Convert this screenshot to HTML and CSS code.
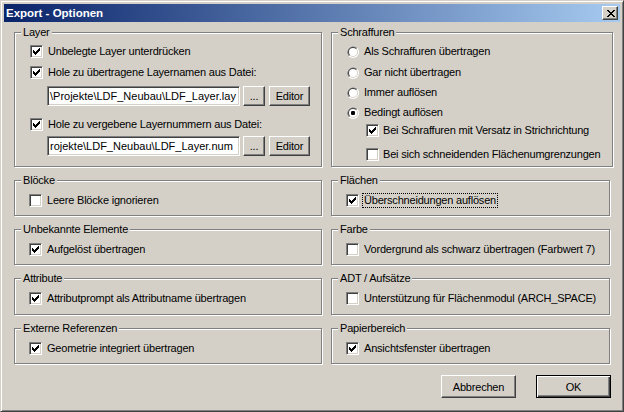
FILE: index.html
```html
<!DOCTYPE html>
<html lang="de">
<head>
<meta charset="utf-8">
<title>Export - Optionen</title>
<link rel="stylesheet" href="styles.css">
</head>
<body>
<div class="window">
  <div class="titlebar">
    <span class="title">Export - Optionen</span>
    <span class="close"><svg width="8" height="7" viewBox="0 0 8 7"><path d="M0 0h2v1H0zM6 0h2v1H6zM1 1h2v1H1zM5 1h2v1H5zM2 2h4v1H2zM3 3h2v1H3zM2 4h4v1H2zM1 5h2v1H1zM5 5h2v1H5zM0 6h2v1H0zM6 6h2v1H6z" fill="#000"/></svg></span>
  </div>
  <div class="client">
    <div class="groups">
      <fieldset class="group">
        <legend>Layer</legend>
        <div class="content big layer">
          <div class="row r1"><span class="cb"><svg class="chk" width="7" height="7" viewBox="0 0 7 7"><path d="M0 2h1v3H0zM1 3h1v3H1zM2 4h1v3H2zM3 3h1v3H3zM4 2h1v3H4zM5 1h1v3H5zM6 0h1v3H6z"/></svg></span><span>Unbelegte Layer unterdrücken</span></div>
          <div class="row r2"><span class="cb"><svg class="chk" width="7" height="7" viewBox="0 0 7 7"><path d="M0 2h1v3H0zM1 3h1v3H1zM2 4h1v3H2zM3 3h1v3H3zM4 2h1v3H4zM5 1h1v3H5zM6 0h1v3H6z"/></svg></span><span>Hole zu übertragene Layernamen aus Datei:</span></div>
          <div class="filerow f1"><div class="textbox">\Projekte\LDF_Neubau\LDF_Layer.lay</div><div class="btn small dots">...</div><div class="btn small editor">Editor</div></div>
          <div class="row r3"><span class="cb"><svg class="chk" width="7" height="7" viewBox="0 0 7 7"><path d="M0 2h1v3H0zM1 3h1v3H1zM2 4h1v3H2zM3 3h1v3H3zM4 2h1v3H4zM5 1h1v3H5zM6 0h1v3H6z"/></svg></span><span>Hole zu vergebene Layernummern aus Datei:</span></div>
          <div class="filerow f2"><div class="textbox">rojekte\LDF_Neubau\LDF_Layer.num</div><div class="btn small dots">...</div><div class="btn small editor">Editor</div></div>
        </div>
      </fieldset>
      <fieldset class="group wide">
        <legend>Schraffuren</legend>
        <div class="content big hatch">
          <div class="row q1"><span class="radio"><svg width="12" height="12" viewBox="0 0 12 12"><circle cx="6" cy="6" r="6" fill="#fff"/><path d="M1.76 10.24A6 6 0 0 1 10.24 1.76Z" fill="#808080"/><circle cx="6" cy="6" r="5" fill="#D4D0C8"/><path d="M2.46 9.54A5 5 0 0 1 9.54 2.46Z" fill="#404040"/><circle cx="6" cy="6" r="4" fill="#fff"/></svg></span><span>Als Schraffuren übertragen</span></div>
          <div class="row q2"><span class="radio"><svg width="12" height="12" viewBox="0 0 12 12"><circle cx="6" cy="6" r="6" fill="#fff"/><path d="M1.76 10.24A6 6 0 0 1 10.24 1.76Z" fill="#808080"/><circle cx="6" cy="6" r="5" fill="#D4D0C8"/><path d="M2.46 9.54A5 5 0 0 1 9.54 2.46Z" fill="#404040"/><circle cx="6" cy="6" r="4" fill="#fff"/></svg></span><span>Gar nicht übertragen</span></div>
          <div class="row q3"><span class="radio"><svg width="12" height="12" viewBox="0 0 12 12"><circle cx="6" cy="6" r="6" fill="#fff"/><path d="M1.76 10.24A6 6 0 0 1 10.24 1.76Z" fill="#808080"/><circle cx="6" cy="6" r="5" fill="#D4D0C8"/><path d="M2.46 9.54A5 5 0 0 1 9.54 2.46Z" fill="#404040"/><circle cx="6" cy="6" r="4" fill="#fff"/></svg></span><span>Immer auflösen</span></div>
          <div class="row q4"><span class="radio"><svg width="12" height="12" viewBox="0 0 12 12"><circle cx="6" cy="6" r="6" fill="#fff"/><path d="M1.76 10.24A6 6 0 0 1 10.24 1.76Z" fill="#808080"/><circle cx="6" cy="6" r="5" fill="#D4D0C8"/><path d="M2.46 9.54A5 5 0 0 1 9.54 2.46Z" fill="#404040"/><circle cx="6" cy="6" r="4" fill="#fff"/><rect x="4" y="4" width="4" height="4" rx="1.2" fill="#000"/></svg></span><span>Bedingt auflösen</span></div>
          <div class="row q5 sub"><span class="cb"><svg class="chk" width="7" height="7" viewBox="0 0 7 7"><path d="M0 2h1v3H0zM1 3h1v3H1zM2 4h1v3H2zM3 3h1v3H3zM4 2h1v3H4zM5 1h1v3H5zM6 0h1v3H6z"/></svg></span><span>Bei Schraffuren mit Versatz in Strichrichtung</span></div>
          <div class="row q6 sub"><span class="cb"></span><span>Bei sich schneidenden Flächenumgrenzungen</span></div>
        </div>
      </fieldset>
      <fieldset class="group">
        <legend>Blöcke</legend>
        <div class="content"><div class="row"><span class="cb"></span><span>Leere Blöcke ignorieren</span></div></div>
      </fieldset>
      <fieldset class="group narrow">
        <legend>Flächen</legend>
        <div class="content"><div class="row tight"><span class="cb"><svg class="chk" width="7" height="7" viewBox="0 0 7 7"><path d="M0 2h1v3H0zM1 3h1v3H1zM2 4h1v3H2zM3 3h1v3H3zM4 2h1v3H4zM5 1h1v3H5zM6 0h1v3H6z"/></svg></span><span class="focus">Überschneidungen auflösen</span></div></div>
      </fieldset>
      <fieldset class="group">
        <legend>Unbekannte Elemente</legend>
        <div class="content"><div class="row"><span class="cb"><svg class="chk" width="7" height="7" viewBox="0 0 7 7"><path d="M0 2h1v3H0zM1 3h1v3H1zM2 4h1v3H2zM3 3h1v3H3zM4 2h1v3H4zM5 1h1v3H5zM6 0h1v3H6z"/></svg></span><span>Aufgelöst übertragen</span></div></div>
      </fieldset>
      <fieldset class="group narrow">
        <legend>Farbe</legend>
        <div class="content"><div class="row"><span class="cb"></span><span>Vordergrund als schwarz übertragen (Farbwert 7)</span></div></div>
      </fieldset>
      <fieldset class="group">
        <legend>Attribute</legend>
        <div class="content"><div class="row"><span class="cb"><svg class="chk" width="7" height="7" viewBox="0 0 7 7"><path d="M0 2h1v3H0zM1 3h1v3H1zM2 4h1v3H2zM3 3h1v3H3zM4 2h1v3H4zM5 1h1v3H5zM6 0h1v3H6z"/></svg></span><span>Attributprompt als Attributname übertragen</span></div></div>
      </fieldset>
      <fieldset class="group narrow">
        <legend>ADT / Aufsätze</legend>
        <div class="content"><div class="row"><span class="cb"></span><span>Unterstützung für Flächenmodul (ARCH_SPACE)</span></div></div>
      </fieldset>
      <fieldset class="group">
        <legend>Externe Referenzen</legend>
        <div class="content"><div class="row"><span class="cb"><svg class="chk" width="7" height="7" viewBox="0 0 7 7"><path d="M0 2h1v3H0zM1 3h1v3H1zM2 4h1v3H2zM3 3h1v3H3zM4 2h1v3H4zM5 1h1v3H5zM6 0h1v3H6z"/></svg></span><span>Geometrie integriert übertragen</span></div></div>
      </fieldset>
      <fieldset class="group narrow">
        <legend>Papierbereich</legend>
        <div class="content"><div class="row"><span class="cb"><svg class="chk" width="7" height="7" viewBox="0 0 7 7"><path d="M0 2h1v3H0zM1 3h1v3H1zM2 4h1v3H2zM3 3h1v3H3zM4 2h1v3H4zM5 1h1v3H5zM6 0h1v3H6z"/></svg></span><span>Ansichtsfenster übertragen</span></div></div>
      </fieldset>
    </div>
    <div class="buttons">
      <div class="btn push">Abbrechen</div>
      <div class="btn push default">OK</div>
    </div>
  </div>
</div>
</body>
</html>
```

FILE: styles.css
```css
* { box-sizing: border-box; }
html, body { margin: 0; padding: 0; }
body {
  width: 624px;
  height: 412px;
  overflow: hidden;
  background: #D4D0C8;
  font-family: "Liberation Sans", Arial, sans-serif;
  font-size: 11px;
  letter-spacing: -0.2px;
  color: #000;
}
.window {
  width: 624px;
  height: 412px;
  background: #D4D0C8;
  border: 1px solid;
  border-color: #D4D0C8 #404040 #404040 #D4D0C8;
  box-shadow: inset 1px 1px #fff, inset -1px -1px #808080;
  padding: 3px;
  display: flex;
  flex-direction: column;
}
.titlebar {
  height: 18px;
  flex: none;
  background: linear-gradient(to right, #0A246A, #A6CAF0);
  display: flex;
  align-items: center;
  justify-content: space-between;
  padding: 0 2px 0 2px;
}
.title {
  color: #fff;
  font-weight: bold;
  font-size: 11.5px;
  letter-spacing: 0;
  line-height: 18px;
}
.close {
  width: 16px;
  height: 14px;
  background: #D4D0C8;
  border: 1px solid;
  border-color: #fff #404040 #404040 #fff;
  box-shadow: inset -1px -1px #808080;
  display: flex;
  align-items: center;
  justify-content: center;
  padding-left: 1px;
}
.close svg { display: block; }
.client {
  flex: 1;
  padding: 4px 0 0 10px;
}
.groups {
  display: grid;
  grid-template-columns: 308px 282px;
  grid-template-rows: 141px 42px 42px 43px 42px;
  column-gap: 9px;
  row-gap: 7px;
}
.group {
  margin: 0;
  padding: 0;
  min-width: 0;
  border: 1px solid #808080;
  box-shadow: inset 1px 1px #fff, 1px 1px #fff;
}
.group.narrow { width: 279px; }
.group legend {
  margin-left: 6px;
  padding: 0 2px 0 2px;
  height: 13px;
  line-height: 13px;
  background: #D4D0C8;
}
.content {
  padding: 7px 0 0 14px;
}
.content.big { padding: 6px 0 0 15px; }
.row {
  display: flex;
  align-items: center;
  height: 13px;
  line-height: 13px;
  gap: 5px;
  white-space: nowrap;
}
.row.tight { gap: 3px; }
.layer .r2 { margin-top: 8px; }
.layer .r3 { margin-top: 12px; }
.hatch .q2 { margin-top: 8px; }
.hatch .q3 { margin-top: 7px; }
.hatch .q4 { margin-top: 7px; }
.hatch .q5 { margin-top: 5px; }
.hatch .q6 { margin-top: 11px; }
.hatch .sub { margin-left: 19px; gap: 4px; }
.cb {
  flex: none;
  width: 13px;
  height: 13px;
  background: #fff;
  border: 1px solid;
  border-color: #808080 #fff #fff #808080;
  box-shadow: inset 1px 1px #404040, inset -1px -1px #D4D0C8;
  padding: 2px;
}
.cb .chk { display: block; fill: #000; }
.radio {
  flex: none;
  width: 12px;
  height: 12px;
}
.radio svg { display: block; }
.focus {
  border: 1px dotted #000;
  padding: 0 1px;
  line-height: 13px;
}
.filerow {
  display: flex;
  margin-left: 17px;
  height: 20px;
}
.filerow.f1 { margin-top: 7px; }
.filerow.f2 { margin-top: 5px; }
.textbox {
  width: 193px;
  height: 20px;
  background: #fff;
  border: 1px solid;
  border-color: #808080 #fff #fff #808080;
  box-shadow: inset 1px 1px #404040, inset -1px -1px #D4D0C8;
  padding: 0 0 0 2px;
  line-height: 18px;
  letter-spacing: 0;
  white-space: nowrap;
  overflow: hidden;
}
.btn {
  display: flex;
  align-items: center;
  justify-content: center;
  border: 1px solid;
  border-color: #fff #404040 #404040 #fff;
  box-shadow: inset -1px -1px #808080;
  background: #D4D0C8;
  white-space: nowrap;
}
.btn.small { height: 20px; }
.btn.dots { width: 22px; margin-left: 3px; }
.btn.editor { width: 41px; margin-left: 4px; }
.buttons {
  display: flex;
  justify-content: flex-end;
  gap: 20px;
  margin-top: 11px;
  padding-right: 9px;
}
.btn.push { width: 75px; height: 23px; }
.btn.default {
  border-color: #000;
  box-shadow: inset 1px 1px #fff, inset -1px -1px #404040, inset -2px -2px #808080;
}
```
